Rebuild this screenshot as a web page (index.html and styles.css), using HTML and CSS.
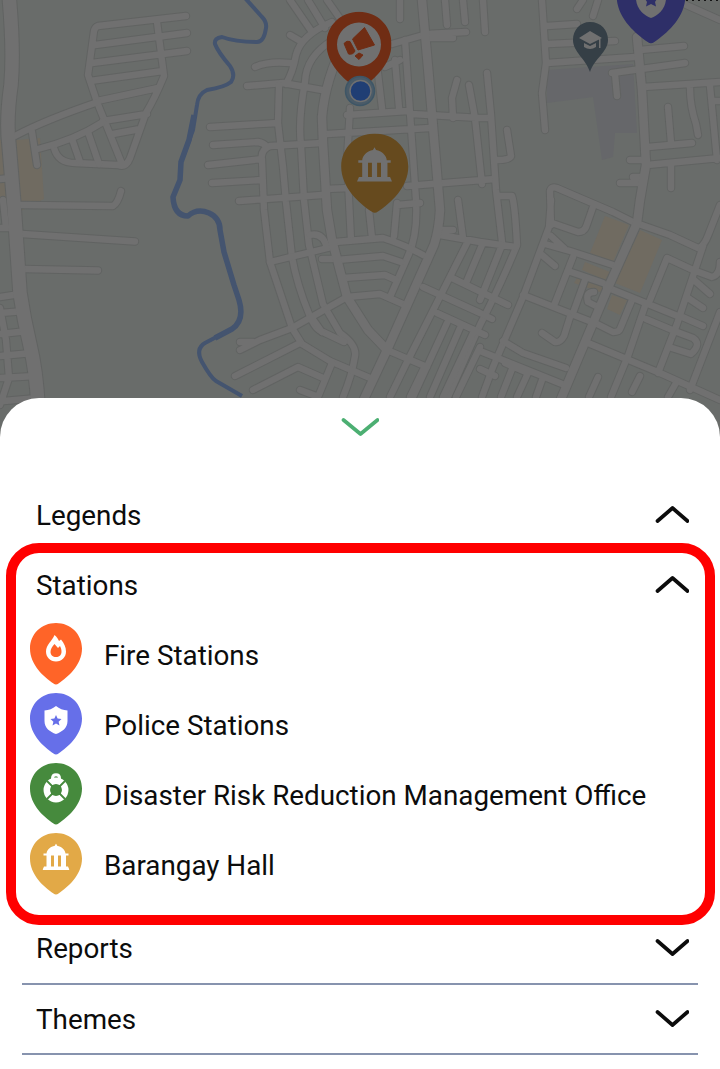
FILE: index.html
```html
<!DOCTYPE html>
<html lang="en">
<head>
<meta charset="utf-8">
<title>Map legend</title>
<link rel="stylesheet" href="styles.css">
</head>
<body>
<svg class="defs" width="0" height="0">
  <symbol id="pin" viewBox="0 0 52 62"><path d="M26 0C11.500 0 0 11 0 25.500C0 42 14 54 23.500 60.500Q26 62.500 28.500 60.500C38 54 52 42 52 25.500C52 11 40.500 0 26 0Z"/></symbol>
  <symbol id="hall" viewBox="0 0 27 27"><path d="M13.500 0L14.700 2.200C19 3 22.500 6 23 10H26V12H23.500V23H25.500L27 26.500H0L1.500 23H4V12H1V10H4C4.500 6 8 3 12.300 2.200ZM8.500 12V23H11.500V12ZM15.500 12V23H18.500V12Z" fill-rule="evenodd"/></symbol>
  <symbol id="up" viewBox="0 0 34 20"><path class="chevron" d="M2.500 16L17.500 3L32.500 16"/></symbol>
  <symbol id="down" viewBox="0 0 34 20"><path class="chevron" d="M2.500 3L17.500 16L32.500 3"/></symbol>
</svg>
<main class="screen">
  <svg class="map" viewBox="0 0 720 440">
    <path class="campus" d="M547 70L633 64L637 133H615L613 157L602 160L593 97L547 103Z"/>
    <path class="plot" d="M17 140L40 138L44 199L21 211L0 200V140ZM605 216L629 225L613 262L590 253ZM640 230L662 240L640 293L615 283ZM612 295L627 300L620 315L607 309ZM585 262L610 272L605 280L582 270ZM577 278L606 286L600 292L574 283Z"/>
    <defs>
      <g id="roads">
        <path d="M186 16L98 26Q95 27 94 31L88 75L97 102L122 164M157 22L164 76Q155 98 146 113L130 158Q126 168 118 165L75 163Q58 163 54 148M187 33L95 45M187 51L92 63M163 71L90 81M158 88L97 101M147 114L103 121M140 129L113 134"/>
        <path d="M15 136Q45 120 98 102M38 149Q75 140 103 122M32 132L37 165M72 139L80 162M88 132L99 164M20 205L113 206Q118 203 121 191M22 234L135 241.500M24 269L98 270.500"/>
        <path d="M0 228H16M0 179L12 178M3 200L6 228M0 297L20 294M0 313L25 311M0 334L28 331M0 356L32 353M0 378L36 376M4 401L38 398M0 308L6 340L9 378L0 405"/>
        <path d="M290 0L312 32M308 0L325 28M327 0L348 30M290 35L302 42M332 22Q301 35 296 55Q293 72 286 84M255 67Q268 61 290 63M247 86L283 83L322 90M333 40Q306 56 305 82Q298 120 301 145L304 200L309 245L323 304L340 333Q357 345 355 356Q352 375 343 397"/>
        <path d="M279 85L278 123L283 167L286 202L292 257Q297 285 309 314Q315 330 323 332L344 342M210 127L278 123M213 145L258 142Q264 143 267 147M208 165L262 159M212 183L262 180M239 201L322 195M322 143L270 146Q260 150 262 160L264 210L270 262L292 328L302 344L330 361L370 378"/>
        <path d="M392 44L427 34L466 32M427 38H453M405 40L410 113L416 200Q418 235 408 256L390 297M377 65L382 108M395 60L399 108M350 108L347 160L351 240M347 115L408 111M327 134L430 128M412 114L480 118H490M457 80L452 98L453 118M469 85L475 118L482 184M407 186L495 179M385 67L400 60M350 188L325 189"/>
        <path d="M400 0V19M445 0L447 25M463 0L465 22M483 0L485 32M487 73L491 115L496 190L502 242M507 130L511 156Q510 160 497 160M500 196L512 196Q515 205 517 245Q502 282 480 325L448 397M542 0L546 63L542 93L545 130M583 0L577 9M598 0L593 16M547 26L577 24M548 44L615 41M547 63L635 57"/>
        <path d="M640 50L684 46M612 73L685 63M615 74L617 96M643 87L720 82M668 107L671 143M648 147L692 143M690 88Q690 106 696 124L698 135M710 86L717 160M647 165L720 158M630 160H647M633 177H643M620 183H643M671 165V188M684 4L720 20M715 101H720"/>
        <path d="M551 225L550 191Q551 186 557 188L613 212L633 222L670 235L698 248Q704 247 709 233L720 205M551 200L549 227L523 297L493 367L482 397M552 223L578 232Q584 232 586 227L593 207M545 244L570 251L613 265M551 236L565 249M542 255L555 266M573 257L555 303M568 271L603 283M585 280L573 313M523 295L597 324L613 332Q619 332 620 329L632 300"/>
        <path d="M606 287L680 317M594 292Q585 292 588 302L600 308M570 317L564 336Q560 343 555 342L542 333M588 343L660 373L720 400M646 303L628 356M650 300L667 258L693 270L712 277Q720 275 720 262M703 246L677 324L658 373M694 280L710 294M688 298L703 308M680 316L703 326M677 332L693 338Q702 344 691 354L672 348M646 319L677 332M720 312L690 390"/>
        <path d="M480 351L567 386M480 369L495 376M503 341L523 353L566 368M505 363L528 373L517 397M512 369L501 397M542 380L536 397M598 377L589 397M625 363L611 397M640 376L632 392M676 383L668 397"/>
        <path d="M440 235L480 242L516 247M458 200L463 238M442 230H453M467 243L407 362L390 397M423 287L480 313L492 319M450 277L508 305M437 313L485 335M387 350L427 367M447 323L413 397M460 328L430 397M473 333L443 397M480 347L456 397M482 245L466 283M502 245L480 300M423 370L410 397"/>
        <path d="M335 242L383 238Q405 245 423 255M337 260L383 256L401 262M343 278L385 275L396 280M347 297L380 294L405 305M369 210L372 238M397 203L394 236M397 205L420 203M332 247L270 262M240 350L260 340L292 328L347 297M240 342H253M235 376L300 343M253 390L298 367L323 378M300 390L316 396M332 363L318 397M312 318L322 332M322 259H332M310 235Q323 232 327 248"/>
        <path class="wide" d="M422 0L428 67L440 210Q439 230 434 245L387 350L364 399M345 40Q325 80 322 117L323 143L327 210L332 240L347 297L368 330L387 350M637 37L642 90L646 165L640 200L637 223L607 290L561 399"/>
        <path class="main" d="M9 -5Q14 50 11 85Q6 120 9 145L14 205L20 293Q24 320 30 345Q36 370 38 405"/>
      </g>
    </defs>
    <use href="#roads" class="casing"/>
    <use href="#roads" class="surface"/>
    <path class="river" d="M245 -2L262 17Q267 22 266 28Q264 42 257 42Q235 42 222 37Q214 38 215 44Q218 52 230 66Q236 75 231 82Q225 87 207 90Q198 94 197 105L193 130L183 157"/>
    <path class="river river-wide" d="M194 115L189 140L181 162L180 180L173 197Q174 216 188 216Q197 208 209 213Q220 218 220 230L224 252L234 285L239 300Q245 320 232 329L215 338"/>
    <path class="river" d="M222 334L205 343Q195 349 202 362Q211 378 216 381L242 396"/>

    <use href="#pin" class="report-pin" x="326.500" y="11.500" width="65" height="78"/>
    <circle class="report-disc" cx="359" cy="44.500" r="22"/>
    <path class="report-icon" d="M352.500 39L364.500 27.500L374.500 45L358 50ZM344 43.500Q347 40 350 41.500L355 51Q353 55 348.500 54ZM355 56L359 53L363 55L359 59.500Z"/>
    <circle class="me-halo" cx="360" cy="91" r="14.500"/>
    <circle class="me" cx="360.500" cy="91" r="10.500"/>
    <use href="#pin" class="hall-pin" x="340.500" y="133.500" width="68.500" height="80"/>
    <use href="#hall" class="map-glyph" x="357" y="147" width="35" height="35.500"/>
    <path class="school-pin" d="M590 22C601 22 608 30 608 40C608 52 594 59 590 72C586 59 573 52 573 40C573 30 580 22 590 22Z"/>
    <path class="map-glyph" d="M579 38L590 31L602 38L590 44ZM584 43L590 46L596 43V47Q590 51 584 47ZM599 39H600.500V48H599Z"/>
    <use href="#pin" class="police-pin" x="616.500" y="-38" width="69" height="82"/>
    <path class="map-glyph" d="M636 -5H666C667 8 659 15 651 18C643 15 635 8 636 -5Z"/>
    <path class="police-pin" d="M651 -6L653.200 -2H657.500L655 2L656 6.500L651 4L646 6.500L647 2L644.500 -2H648.800Z"/>
    <path class="label-edge" d="M686 0H719"/>
  </svg>

  <section class="sheet">
    <div class="handle"><svg class="handle-icon" viewBox="0 0 38 20"><path class="chevron" d="M2.500 3L19.500 17L36.500 3"/></svg></div>
    <header class="row legends"><span>Legends</span><svg class="arrow"><use href="#up"/></svg></header>
    <section class="stations">
      <header class="row"><span>Stations</span><svg class="arrow"><use href="#up"/></svg></header>
      <ul class="list">
        <li class="item">
          <svg class="pin" viewBox="0 0 52 62"><use href="#pin" class="fire"/><path class="glyph" fill-rule="evenodd" d="M24.500 12C27 14 28 16 29 18L31 16.500C34 20 36 24 36 28.500C36 34 32 38.500 26 38.500C20 38.500 16 34 16 28.500C16 22 22 18 24.500 12ZM24.500 21C22 24 20.500 26 20.500 29C20.500 32 23 34 26 34C29 34 31.500 32 31.500 29C31.500 26.500 31 25 30 23L28 25Z"/></svg>
          <span>Fire Stations</span>
        </li>
        <li class="item">
          <svg class="pin" viewBox="0 0 52 62"><use href="#pin" class="police"/><path class="glyph" d="M26 13Q31 17 37.500 17.500V28C37.500 35 32 39 26 41C20 39 14.500 35 14.500 28V17.500Q21 17 26 13Z"/><path class="police" d="M26 22L27.600 25.500L31.500 26L28.600 28.700L29.500 32.500L26 30.600L22.500 32.500L23.400 28.700L20.500 26L24.400 25.500Z"/></svg>
          <span>Police Stations</span>
        </li>
        <li class="item">
          <svg class="pin" viewBox="0 0 52 62"><use href="#pin" class="rescue"/><circle class="ring" cx="26" cy="27" r="9.200"/><rect class="rescue" x="21" y="22" width="10" height="10" rx="1.500"/><path class="bands" d="M17 18L22 23M35 18L30 23M17 36L22 31M35 36L30 31"/><path class="loop" d="M22.500 17V15.500Q22.500 11.800 26 11.800Q29.500 11.800 29.500 15.500V17"/></svg>
          <span>Disaster Risk Reduction Management Office</span>
        </li>
        <li class="item">
          <svg class="pin" viewBox="0 0 52 62"><use href="#pin" class="barangay"/><use href="#hall" class="glyph" x="12.500" y="10.500" width="27" height="27"/></svg>
          <span>Barangay Hall</span>
        </li>
      </ul>
    </section>
    <div class="row reports"><span>Reports</span><svg class="arrow"><use href="#down"/></svg></div>
    <div class="row themes"><span>Themes</span><svg class="arrow"><use href="#down"/></svg></div>
  </section>
</main>
</body>
</html>
```
FILE: styles.css
```css
* { box-sizing: border-box; }
body { margin: 0; background: #fff; font-family: Roboto, sans-serif; font-size: 27.8px; color: #0c0c0c; }
.defs { position: absolute; }
.screen { width: 720px; height: 1069px; overflow: hidden; }

.map { display: block; width: 720px; height: 440px; background: #696c6a; }
.map #roads path { --w: 6.4px; fill: none; stroke-width: calc(var(--w) + var(--edge)); stroke-linecap: round; stroke-linejoin: round; }
.map #roads .wide { --w: 8.5px; }
.map #roads .main { --w: 13.5px; }
.casing { --edge: 2px; stroke: #616362; }
.surface { --edge: 0px; stroke: #707070; }
.campus { fill: #66676a; }
.plot { fill: #706b61; }
.river { fill: none; stroke: #44546f; stroke-width: 4; stroke-linejoin: round; }
.river-wide { stroke-width: 5.5; }
.report-pin { fill: #702d14; }
.report-disc { fill: #707070; }
.report-icon { fill: #702d14; stroke: #702d14; stroke-linejoin: round; }
.me-halo { fill: #4a5b68; stroke: #3e5666; stroke-width: 1.5; }
.me { fill: #203e74; stroke: #707070; stroke-width: 1.5; }
.hall-pin { fill: #664a1e; }
.map-glyph { fill: #707070; }
.school-pin { fill: #353f46; }
.police-pin { fill: #2e2f68; }
.label-edge { stroke: #151515; stroke-width: 2; stroke-dasharray: 2 4; }

.sheet { position: relative; height: 671px; margin-top: -42px; padding: 0 6px; background: #fff; border-radius: 39px 39px 0 0; }
.chevron { fill: none; stroke: currentColor; stroke-width: 3.7; stroke-linecap: round; stroke-linejoin: round; }
.handle { display: flex; justify-content: center; height: 82px; padding-top: 19px; color: #4caf72; }
.handle-icon { width: 38px; height: 20px; }
.row { display: flex; align-items: center; justify-content: space-between; height: 70px; }
.arrow { width: 34px; height: 20px; }
.legends { height: 63px; padding: 7px 25px 0 30px; }
.stations { width: 709px; height: 382px; border: 10px solid #f00; border-radius: 33px; }
.stations .row { height: 64px; padding: 0 16px 0 20px; }
.list { margin: 0; padding: 3px 0 0 14px; list-style: none; }
.item { display: flex; align-items: center; gap: 22px; height: 70px; white-space: nowrap; }
.pin { width: 52px; height: 62px; margin-bottom: 3px; }
.glyph { fill: #fff; }
.fire { fill: #ff6428; }
.police { fill: #666fe9; }
.rescue { fill: #468a3d; }
.barangay { fill: #e2a947; }
.ring { fill: none; stroke: #fff; stroke-width: 6.5; }
.bands { stroke: #468a3d; stroke-width: 1.8; }
.loop { fill: none; stroke: #fff; stroke-width: 3; }
.reports, .themes { margin: 0 16px; padding: 0 9px 0 14px; border-bottom: 2px solid #8793ae; }
.reports { height: 60px; padding-bottom: 11px; }
.themes { padding-top: 1px; }
.themes .arrow, .reports .arrow { margin-bottom: 2px; }
```
